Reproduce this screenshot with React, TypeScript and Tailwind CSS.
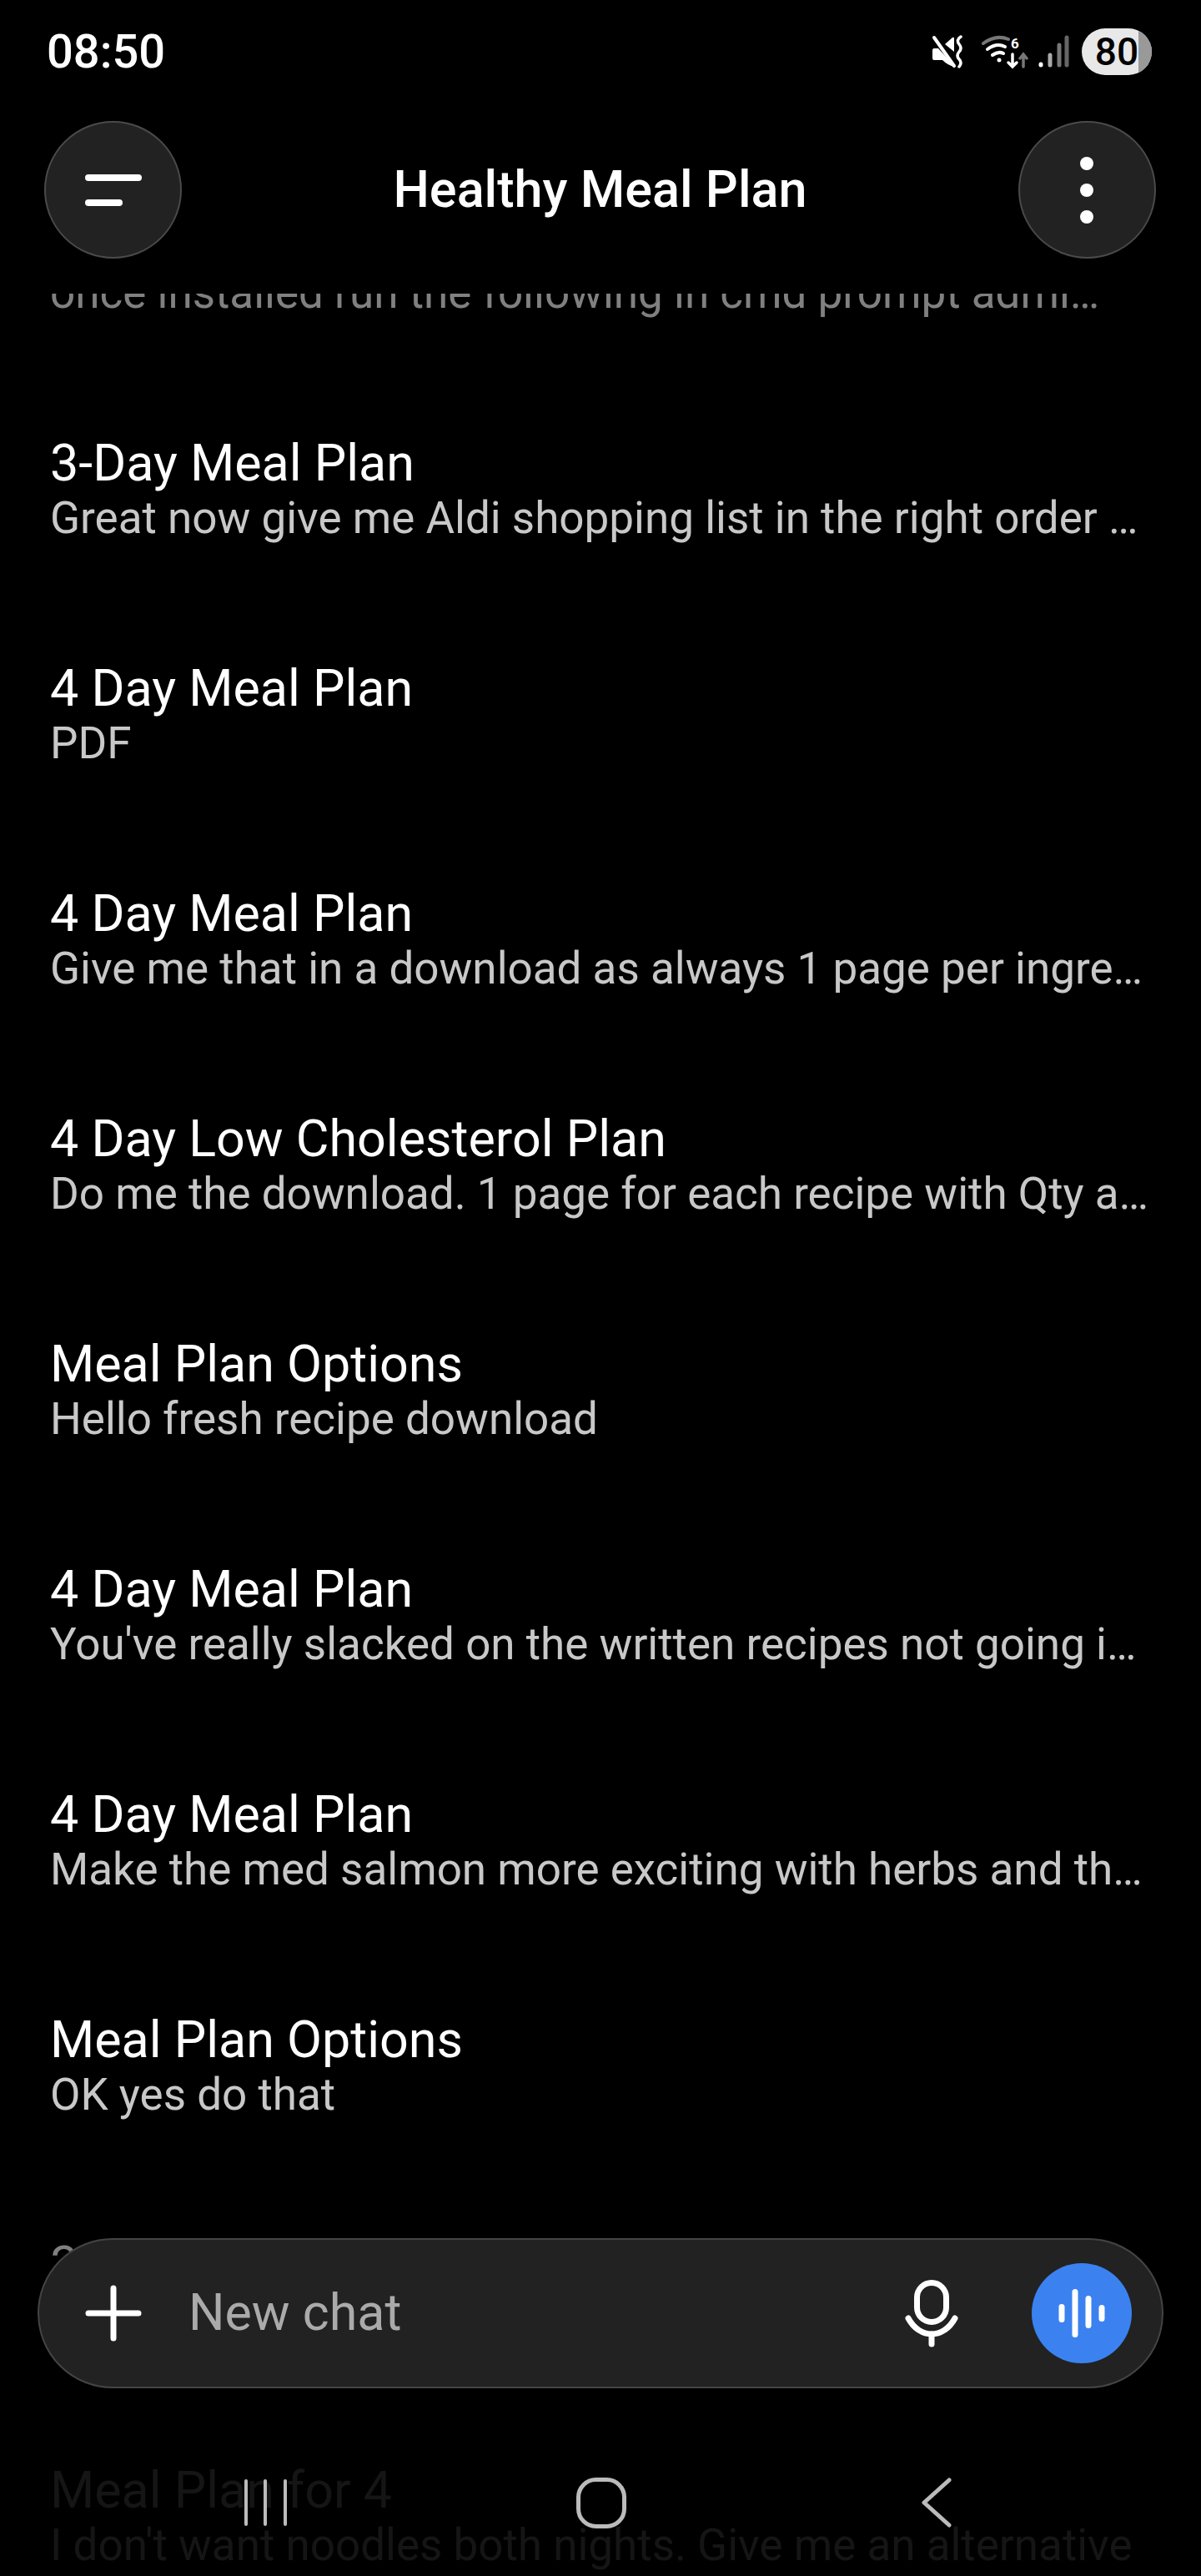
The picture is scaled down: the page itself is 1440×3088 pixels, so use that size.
const chats = [
  { title: '\u00a0', sub: 'once installed run the following in cmd prompt admi…', tone: 'faded' },
  { title: '3-Day Meal Plan', sub: 'Great now give me Aldi shopping list in the right order …', tone: 'normal' },
  { title: '4 Day Meal Plan', sub: 'PDF', tone: 'normal' },
  { title: '4 Day Meal Plan', sub: 'Give me that in a download as always 1 page per ingre…', tone: 'normal' },
  { title: '4 Day Low Cholesterol Plan', sub: 'Do me the download. 1 page for each recipe with Qty a…', tone: 'normal' },
  { title: 'Meal Plan Options', sub: 'Hello fresh recipe download', tone: 'normal' },
  { title: '4 Day Meal Plan', sub: "You've really slacked on the written recipes not going i…", tone: 'normal' },
  { title: '4 Day Meal Plan', sub: 'Make the med salmon more exciting with herbs and th…', tone: 'normal' },
  { title: 'Meal Plan Options', sub: 'OK yes do that', tone: 'normal' },
  { title: '3-Day Meal Plan', sub: '\u00a0', tone: 'faded' },
  { title: 'Meal Plan for 4', sub: "I don't want noodles both nights. Give me an alternative", tone: 'dim' },
];

const titleTones: Record<string, string> = {
  normal: 'text-white',
  faded: 'text-[#808080]',
  dim: 'text-[#151515]',
};

const subTones: Record<string, string> = {
  normal: 'text-[#c8c8c8]',
  faded: 'text-[#808080]',
  dim: 'text-[#151515]',
};

function ChatRow({ title, sub, tone }: { title: string; sub: string; tone: string }) {
  return (
    <div className="h-[270px] pl-[60px] pr-[20px]">
      <div className={`text-[61px] leading-[68px] whitespace-nowrap ${titleTones[tone]}`}>{title}</div>
      <div className={`text-[53px] leading-[64px] whitespace-nowrap ${subTones[tone]}`}>{sub}</div>
    </div>
  );
}

function MuteIcon() {
  return (
    <svg width="38" height="40" viewBox="0 0 38 40" fill="none">
      <path d="M1 18q0-2 2-2h5l19 21v1q-8-2-14-8H3q-2 0-2-2z" fill="#fff" />
      <path d="M3 3l24 34" stroke="#fff" strokeWidth="4" strokeLinecap="round" />
      <path d="M16 11l9-8q2-1 2 1v16z" fill="#fff" />
      <path d="M35 2q-6 4-2 9t0 9q-4 5 0 9t0 9" stroke="#fff" strokeWidth="3.5" strokeLinecap="round" />
    </svg>
  );
}

function WifiIcon() {
  return (
    <svg width="56" height="42" viewBox="0 0 56 42" fill="none" strokeLinecap="round">
      <path d="M2 11q15-11 30-5" stroke="#777" strokeWidth="4" />
      <path d="M7 18q11-8 21-3" stroke="#fff" strokeWidth="4" />
      <path d="M13 25q7-5 13-2" stroke="#fff" strokeWidth="4" />
      <circle cx="21" cy="31" r="2.5" fill="#fff" />
      <text x="35" y="17" fill="#fff" fontSize="17" fontWeight="700" fontFamily="Roboto, sans-serif">6</text>
      <path d="M37 24v15m-5-5l5 5 5-5" stroke="#fff" strokeWidth="3.5" />
      <path d="M50 39V25m-4 4l4-5 4 5" stroke="#777" strokeWidth="3.5" />
    </svg>
  );
}

function SignalIcon() {
  return (
    <svg width="37" height="40" viewBox="0 0 37 40" fill="none" strokeLinecap="round" strokeWidth="5">
      <path d="M3 36v-1" stroke="#fff" />
      <path d="M14 36V24" stroke="#aaa" />
      <path d="M25 36V12" stroke="#777" />
      <path d="M34 36V3" stroke="#666" />
    </svg>
  );
}

export default function App() {
  return (
    <div className="relative h-[3088px] w-[1440px] overflow-hidden bg-black font-['Roboto',sans-serif]">
      <div className="h-[352px]">
        <div className="flex h-[124px] items-center justify-between pl-[56px] pr-[59px]">
          <span className="text-[56px] font-medium text-white">08:50</span>
          <div className="flex items-center">
            <MuteIcon />
            <div className="ml-[22px]">
              <WifiIcon />
            </div>
            <div className="ml-[12px]">
              <SignalIcon />
            </div>
            <div className="relative ml-[15px] flex h-[56px] w-[84px] items-center justify-center overflow-hidden rounded-full bg-[#e8e8e8]">
              <div className="absolute bottom-0 right-0 top-0 w-[16px] bg-[#999]" />
              <span className="relative text-[46px] font-medium leading-none text-black">80</span>
            </div>
          </div>
        </div>
        <div className="mt-[21px] flex items-center justify-between pl-[53px] pr-[54px]">
          <div className="flex h-[165px] w-[165px] items-center justify-center rounded-full border-2 border-[#4a4a4a] bg-[#222]">
            <div className="flex flex-col gap-[22px]">
              <div className="h-[8px] w-[68px] rounded-full bg-white" />
              <div className="h-[8px] w-[45px] rounded-full bg-white" />
            </div>
          </div>
          <span className="text-[61.2px] font-medium text-white">Healthy Meal Plan</span>
          <div className="flex h-[165px] w-[165px] items-center justify-center rounded-full border-2 border-[#4a4a4a] bg-[#222]">
            <div className="flex flex-col gap-[16px]">
              <div className="h-[16px] w-[16px] rounded-full bg-white" />
              <div className="h-[16px] w-[16px] rounded-full bg-white" />
              <div className="h-[16px] w-[16px] rounded-full bg-white" />
            </div>
          </div>
        </div>
      </div>

      <div className="h-[2736px] overflow-hidden">
        <div className="-mt-[101px]">
          {chats.map((c, i) => (
            <ChatRow key={i} title={c.title} sub={c.sub} tone={c.tone} />
          ))}
        </div>
      </div>

      <div className="absolute left-[45px] top-[2683px] flex h-[180px] w-[1350px] items-center rounded-full border-2 border-[#444] bg-[#222] pl-[55px] pr-[36px]">
        <svg width="68" height="68" viewBox="0 0 68 68" stroke="#fff" strokeWidth="7" strokeLinecap="round">
          <path d="M34 4v60M4 34h60" />
        </svg>
        <span className="ml-[56px] flex-1 text-[61px] text-[#aaa]">New chat</span>
        <svg className="mr-[88px]" width="64" height="81" viewBox="0 0 64 81" fill="none" stroke="#fff" strokeWidth="7" strokeLinecap="round">
          <rect x="14.5" y="3.5" width="35" height="47" rx="17.5" />
          <path d="M4 46c7 13 18 19 28 19s21-6 28-19" />
          <path d="M32 65v12" />
        </svg>
        <div className="flex h-[120px] w-[120px] items-center justify-center rounded-full bg-[#3b82f0]">
          <svg width="60" height="60" viewBox="0 0 60 60" stroke="#fff" strokeWidth="7" strokeLinecap="round">
            <path d="M6 22.5v15" />
            <path d="M22 4.5v51" />
            <path d="M38 12.5v32" />
            <path d="M54 23.5v13" />
          </svg>
        </div>
      </div>

      <div className="absolute bottom-0 left-0 right-0 flex h-[118px] items-start pl-[293px]">
        <svg width="52" height="56" viewBox="0 0 52 56" stroke="#bbb" strokeWidth="4" strokeLinecap="round" className="mt-[2px]">
          <path d="M2 2v52M25 2v52M49 2v52" />
        </svg>
        <svg width="60" height="61" viewBox="0 0 60 61" fill="none" stroke="#bbb" strokeWidth="5" className="ml-[346px]">
          <rect x="2.5" y="2.5" width="55" height="56" rx="21" />
        </svg>
        <svg width="36" height="60" viewBox="0 0 36 60" fill="none" stroke="#bbb" strokeWidth="5" strokeLinecap="round" strokeLinejoin="round" className="ml-[354px]">
          <path d="M33 3L3 30l30 27" />
        </svg>
      </div>
    </div>
  );
}
